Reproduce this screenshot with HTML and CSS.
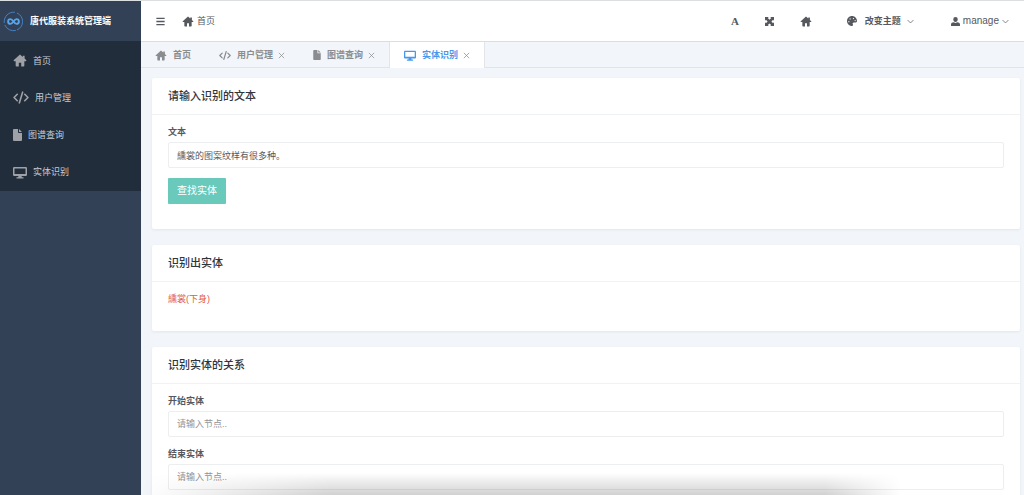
FILE: index.html
```html
<!DOCTYPE html>
<html lang="zh-CN">
<head>
<meta charset="utf-8">
<title>唐代服装系统管理端</title>
<link rel="stylesheet" href="styles.css">
</head>
<body>
<svg class="sprite" aria-hidden="true">
  <symbol id="home" viewBox="0 0 24 24"><path d="M12 1 .6 11.300c-.7.700-.3 1.900.7 1.900H4v8.300c0 1 .5 1.500 1.500 1.500H9.800V16h4.400v7h4.300c1 0 1.500-.5 1.500-1.500v-8.300h2.700c1 0 1.400-1.200.7-1.900L20.500 8.500V3H17v2.500z"/></symbol>
  <symbol id="code" viewBox="0 0 30 24"><path d="M8 6 2 12l6 6M22 6l6 6-6 6M18 2l-6 20" fill="none" stroke="currentColor" stroke-width="3" stroke-linecap="round" stroke-linejoin="round"/></symbol>
  <symbol id="file" viewBox="0 0 18 24"><path d="M2.500 0H10v6.500C10 7.500 10.500 8 11.500 8H18v13.500c0 1.500-1 2.500-2.500 2.500h-13C1 24 0 23 0 21.500v-19C0 1 1 0 2.500 0zM12 0l6 6h-6z"/></symbol>
  <symbol id="screen" viewBox="0 0 28 24"><path fill-rule="evenodd" d="M3 1h22c1.700 0 3 1 3 2.500v13c0 1.500-1.300 2.500-3 2.500h-8l.8 2.500H20c2 0 2 2.500 0 2.500H8c-2 0-2-2.500 0-2.500h2.200L11 19H3c-1.700 0-3-1-3-2.500v-13C0 2 1.300 1 3 1zm0 3v11h22V4z"/></symbol>
  <symbol id="bars" viewBox="0 0 24 24"><path d="M1 2h22v3.500H1zM1 10.300h22v3.500H1zM1 18.500h22V22H1z"/></symbol>
  <symbol id="expand" viewBox="0 0 24 24"><path d="M0 0h10L7.500 2.500 12 7l4.500-4.500L14 0h10v10l-2.500-2.500L17 12l4.500 4.500L24 14v10H14l2.500-2.500L12 17l-4.500 4.500L10 24H0V14l2.500 2.500L7 12 2.500 7.500 0 10z"/></symbol>
  <symbol id="palette" viewBox="0 0 24 24"><path fill-rule="evenodd" d="M12 0C5.400 0 0 5.400 0 12s5.400 12 12 12c2.300 0 3-2 2-4-1.200-2.500 0-4.500 2.500-4.500H21c1.900 0 3-1.500 3-3.500C24 5.400 18.600 0 12 0zM4.500 15a1.500 1.500 0 1 1 0-3 1.500 1.500 0 0 1 0 3zm3-6.500a1.500 1.500 0 1 1 0-3 1.500 1.500 0 0 1 0 3zm8-1a1.500 1.500 0 1 1 0-3 1.500 1.500 0 0 1 0 3zm4 5a1.500 1.500 0 1 1 0-3 1.500 1.500 0 0 1 0 3z"/></symbol>
  <symbol id="user" viewBox="0 0 24 24"><path d="M12 0a6 6 0 0 1 6 6c0 4-2.500 7-6 7S6 10 6 6a6 6 0 0 1 6-6zM7.500 14l4.500 2 4.500-2c4 0 7.500 2 7.500 6v2.500c0 1-.5 1.500-1.500 1.500h-21C.5 24 0 23.500 0 22.500V20c0-4 3.500-6 7.500-6z"/></symbol>
  <symbol id="down" viewBox="0 0 24 24"><path d="M2 7l10 10L22 7" fill="none" stroke="currentColor" stroke-width="2.500"/></symbol>
  <symbol id="close" viewBox="0 0 24 24"><path d="M3 3l18 18M21 3 3 21" fill="none" stroke="currentColor" stroke-width="2.500"/></symbol>
</svg>

<div class="app">
  <aside class="sidebar">
    <div class="brand">
      <svg class="logo" viewBox="0 0 44 44" fill="none" stroke-linecap="round">
        <path class="ring" d="M30 4.500A19.500 19.500 0 0 1 30 39.500M26 41A19.500 19.500 0 0 1 4 30M2.500 24A19.500 19.500 0 0 1 24 2.500"/>
        <path class="loop" d="M22 22c-2.500-3.500-4-5-6.300-5a5 5 0 0 0 0 10c2.300 0 3.800-1.500 6.300-5s4-5 6.300-5a5 5 0 0 1 0 10c-2.300 0-3.800-1.500-6.300-5z"/>
      </svg>
      <strong>唐代服装系统管理端</strong>
    </div>
    <nav class="menu">
      <a href="#"><svg class="icon large"><use href="#home"/></svg>首页</a>
      <a href="#"><svg class="icon wide"><use href="#code"/></svg>用户管理</a>
      <a href="#"><svg class="icon narrow"><use href="#file"/></svg>图谱查询</a>
      <a href="#"><svg class="icon large"><use href="#screen"/></svg>实体识别</a>
    </nav>
  </aside>

  <div class="main">
    <header class="topbar">
      <button class="tool" aria-label="折叠菜单"><svg class="icon small"><use href="#bars"/></svg></button>
      <a class="crumb" href="#"><svg class="icon"><use href="#home"/></svg>首页</a>
      <div class="tools">
        <button class="tool letter">A</button>
        <button class="tool" aria-label="全屏"><svg class="icon small"><use href="#expand"/></svg></button>
        <button class="tool" aria-label="主页"><svg class="icon"><use href="#home"/></svg></button>
      </div>
      <button class="tool theme"><svg class="icon"><use href="#palette"/></svg>改变主题<svg class="icon mini"><use href="#down"/></svg></button>
      <button class="tool account"><svg class="icon small"><use href="#user"/></svg>manage<svg class="icon mini"><use href="#down"/></svg></button>
    </header>

    <nav class="tabs">
      <a class="tab" href="#"><svg class="icon"><use href="#home"/></svg>首页</a>
      <a class="tab" href="#"><svg class="icon"><use href="#code"/></svg>用户管理<svg class="icon mini"><use href="#close"/></svg></a>
      <a class="tab" href="#"><svg class="icon page"><use href="#file"/></svg>图谱查询<svg class="icon mini"><use href="#close"/></svg></a>
      <a class="tab active" href="#"><svg class="icon"><use href="#screen"/></svg>实体识别<svg class="icon mini"><use href="#close"/></svg></a>
    </nav>

    <main class="content">
      <section class="card">
        <h2>请输入识别的文本</h2>
        <form class="body">
          <label for="text">文本</label>
          <input id="text" type="text" value="纁裳的图案纹样有很多种。">
          <button class="primary" type="button">查找实体</button>
        </form>
      </section>
      <section class="card">
        <h2>识别出实体</h2>
        <div class="body"><p class="result">纁裳(下身)</p></div>
      </section>
      <section class="card">
        <h2>识别实体的关系</h2>
        <form class="body">
          <label for="start">开始实体</label>
          <input id="start" type="text" placeholder="请输入节点..">
          <label for="end">结束实体</label>
          <input id="end" type="text" placeholder="请输入节点..">
        </form>
      </section>
    </main>
  </div>
</div>
<div class="shade"></div>
</body>
</html>
```

FILE: styles.css
```css
* { box-sizing: border-box; }

body {
  margin: 0;
  font: 9px/14px "Liberation Sans", "Noto Sans CJK SC", sans-serif;
  color: #55585e;
  background: #f2f5f9;
}

a { color: inherit; text-decoration: none; }
button, input { font: inherit; color: inherit; }

.sprite { position: absolute; width: 0; height: 0; }

.icon { width: 12px; height: 11px; flex: none; fill: currentColor; }
.icon.large { width: 14px; height: 13px; }
.icon.wide { width: 16px; height: 13px; }
.icon.narrow { width: 9px; height: 12px; }
.icon.page { width: 8px; height: 10px; }
.icon.small { width: 9px; height: 9px; }
.icon.mini { width: 7px; height: 7px; }

.app {
  display: flex;
  height: 100vh;
  overflow: hidden;
  border-top: 1px solid #dcdfe2;
}

.sidebar { width: 141px; flex: none; background: #324155; }

.brand {
  display: flex;
  align-items: center;
  gap: 6px;
  height: 40px;
  padding-left: 3px;
  color: #fff;
}
.logo { width: 21px; height: 21px; }
.ring { stroke: #4385cf; stroke-width: 2; }
.loop { stroke: #57a4ee; stroke-width: 4; }

.menu { display: grid; grid-auto-rows: 1fr; height: 150px; padding-top: 1px; background: #222d3b; }
.menu a {
  display: flex;
  align-items: center;
  gap: 6px;
  padding-left: 13px;
  color: #c4ccd6;
}
.menu .icon { color: #a0a1a6; }

.main { display: flex; flex: 1; flex-direction: column; min-width: 0; }

.topbar {
  display: flex;
  align-items: center;
  flex: none;
  height: 41px;
  padding: 0 15px;
  background: #fff;
  border-bottom: 1px solid #dadee1;
}
.tool {
  display: flex;
  align-items: center;
  padding: 0;
  border: 0;
  background: none;
}
.crumb { display: flex; align-items: center; gap: 3px; margin-left: 17px; }
.tools { display: flex; gap: 26px; margin-left: auto; }
.letter { font: bold 11px/14px "Liberation Serif", serif; }
.theme { gap: 8px; margin-left: 35px; font-weight: 700; }
.theme .icon:first-child { width: 10px; height: 10px; }
.theme .mini { margin-left: -2px; }
.account { gap: 3px; margin-left: 37px; font-size: 10px; }

.tabs {
  display: flex;
  flex: none;
  height: 26px;
  border-bottom: 1px solid #e1e5e9;
  color: #8a8c90;
  font-weight: 700;
}
.tab { display: flex; align-items: center; gap: 6px; height: 26px; padding: 0 14px; }
.tab .mini { margin-left: -1px; }
.tab.active {
  color: #4698ee;
  background: #fff;
  border: solid #e1e5e9;
  border-width: 0 1px;
}

.content { display: grid; gap: 16px; padding: 10px 4px 0 11px; }

.card { background: #fff; border-radius: 2px; box-shadow: 0 1px 3px rgba(40, 60, 90, 0.08); }
.card h2 {
  margin: 0;
  padding: 10px 16px;
  border-bottom: 1px solid #f1f2f4;
  color: #30343b;
  font-size: 11px;
  font-weight: 500;
  line-height: 16px;
}
.body { padding: 10px 16px 25px; }
.body label { display: block; font-weight: 700; line-height: 14px; margin-bottom: 3px; }
.body input {
  display: block;
  width: 100%;
  height: 26px;
  margin-bottom: 10px;
  padding: 0 8px;
  border: 1px solid #eceef0;
  border-radius: 2px;
  background: #fff;
  outline: 0;
}
.body input::placeholder { color: #929499; }
.primary {
  display: block;
  padding: 0 9px;
  border: 0;
  border-radius: 1px;
  background: #69c9bb;
  color: #fff;
  font-size: 10px;
  line-height: 26px;
}
.result { margin: 0; color: #e05a49; line-height: 14px; }

.shade {
  position: fixed;
  inset: auto 12% 0 141px;
  height: 22px;
  background: linear-gradient(to bottom, rgba(0, 0, 0, 0), rgba(0, 0, 0, 0.18));
  -webkit-mask-image: linear-gradient(to right, transparent, #000 25%, #000 90%, transparent);
  mask-image: linear-gradient(to right, transparent, #000 25%, #000 90%, transparent);
  pointer-events: none;
}
```
